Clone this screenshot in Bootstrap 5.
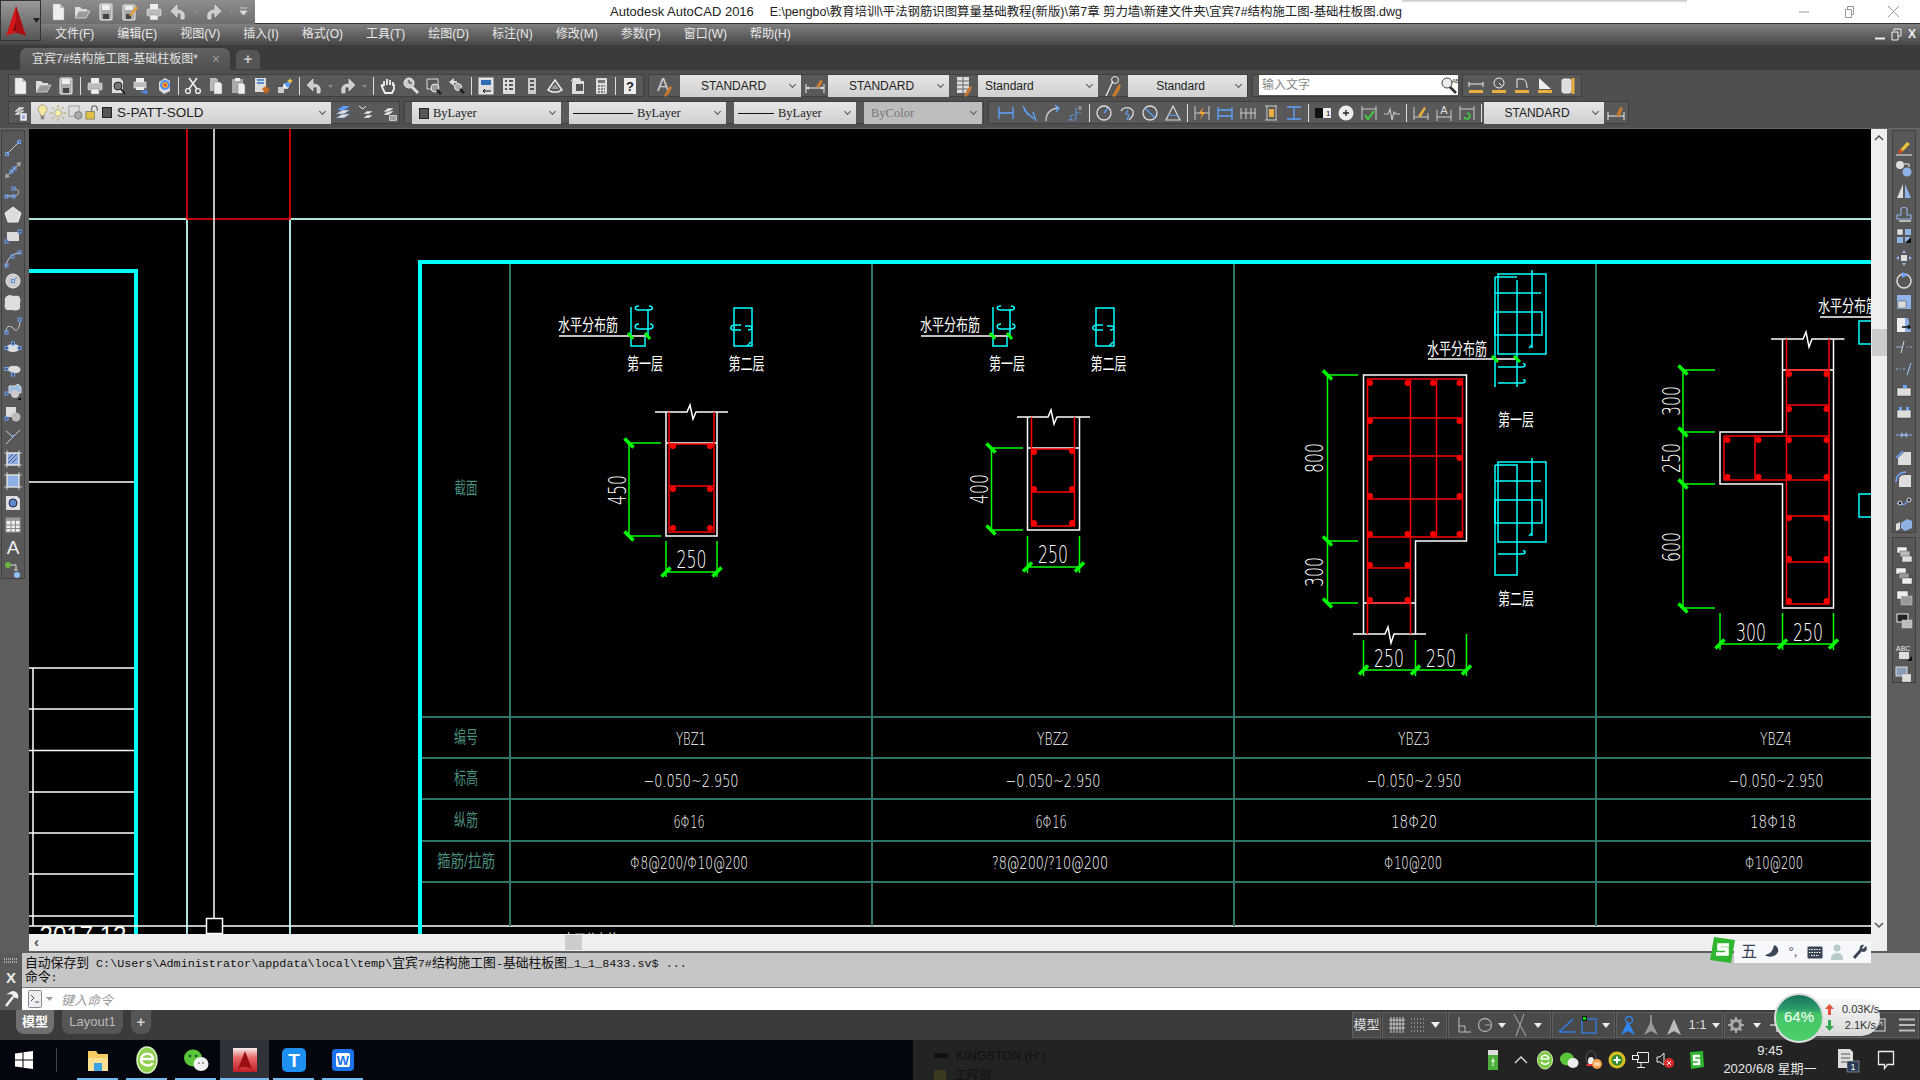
<!DOCTYPE html>
<html lang="zh">
<head>
<meta charset="UTF-8">
<title>Autodesk AutoCAD 2016</title>
<link href="https://cdn.jsdelivr.net/npm/bootstrap@5.3.2/dist/css/bootstrap.min.css" rel="stylesheet">
<style>
    html, body { width: 1920px; height: 1080px; overflow: hidden; background: #3b3b3b; }
    body { font-family: "Liberation Sans", "Noto Sans CJK SC", sans-serif; font-size: 12px; position: relative; }
    svg { display: block; }

    .title-bar { height: 24px; background: #fff; border-bottom: 1px solid #333; }
    .qat { width: 255px; height: 24px; padding-left: 46px; background: linear-gradient(#8d8d8d, #6e6e6e); }
    .qat-btn { width: 24px; height: 23px; }
    .qat-arrow { width: 12px; height: 23px; }
    .title-text { margin-left: 355px; font-size: 12.4px; line-height: 23px; color: #222; white-space: pre; }
    .title-app { font-size: 13px; margin-right: 16px; }
    .title-shade { position: absolute; left: 1402px; top: 0; width: 285px; height: 3px; background: linear-gradient(#c4c4c4, #fff); }
    .win-ctl { width: 45px; height: 23px; color: #999; }
    .app-btn { position: absolute; left: 0; top: 0; width: 41px; height: 41px; background: linear-gradient(#999, #555); border: 1px solid #333; z-index: 5; }

    .menu-bar { height: 21px; padding-left: 55px; gap: 23px; color: #e8e8e8; line-height: 21px; background: linear-gradient(#808080, #474747); }
    .mdi-ctl { color: #eee; font-weight: 700; gap: 6px; padding-right: 4px; }

    .tab-bar { height: 25px; padding-left: 20px; background: #3b3b3b; }
    .doc-tab { width: 210px; height: 22px; margin-top: 3px; padding: 0 10px 0 12px; color: #e2e2e2; background: linear-gradient(#626262, #505050); border-radius: 7px 7px 0 0; line-height: 22px; }
    .doc-tab-x { color: #9a9a9a; font-size: 14px; }
    .doc-tab-add { width: 24px; height: 19px; margin: 5px 0 0 6px; background: #555; border-radius: 5px 5px 0 0; color: #ccc; font-weight: 700; font-size: 15px; line-height: 18px; text-align: center; }

    .tool-area { height: 59px; padding: 4px 0 0 8px; background: #4f4f4f; gap: 4px; border-bottom: 1px solid #666; }
    .tool-row { height: 23px; }
    .tool-panel { height: 23px; background: #595959; box-shadow: inset 0 0 0 1px #3f3f3f; }
    .tool-btn { width: 23px; height: 22px; flex: none; }
    .tool-btn-sm { width: 11px; height: 22px; flex: none; }
    .tool-sep { width: 6px; height: 22px; flex: none; background: linear-gradient(#ddd, #ddd) center / 1px 18px no-repeat; }
    .combo { position: relative; height: 22px; flex: none; padding-left: 7px; background: linear-gradient(#e6e6e6, #d0d0d0); color: #222; line-height: 22px; white-space: nowrap; }
    .combo::after { content: ""; position: absolute; right: 6px; top: 7px; width: 5px; height: 5px; border-right: 1px solid #555; border-bottom: 1px solid #555; transform: rotate(45deg); }
    .combo-std { text-align: center; padding: 0 14px 0 0; }
    .combo-off { background: #bdbdbd; color: #777; }
    .combo-byl { font-family: "Liberation Serif", serif; font-size: 12.5px; }
    .combo-layer { padding-left: 6px; gap: 2px; }
    .layer-name { font-size: 13.5px; margin-left: 3px; }
    .line-swatch { display: inline-block; width: 48px; border-top: 1px solid #111; vertical-align: middle; margin-right: 4px; }
    .color-swatch { display: inline-block; width: 10px; height: 11px; background: #555; border: 1px solid #222; vertical-align: -2px; margin-right: 4px; }
    .text-search { width: 199px; height: 20px; margin: 1px 0 0 7px; padding-left: 3px; background: #fff; color: #888; font-size: 12px; line-height: 20px; }

    .side-strip { background: #5e5e5e; flex: none; }
    .side-strip-l { width: 29px; padding: 1px 0 0 1px; }
    .side-strip-r { width: 33px; padding: 1px 0 0 5px; }
    .side-panel { width: 24px; background: #585858; box-shadow: inset 0 0 0 1px #404040; padding-top: 8px; }
    .side-panel-l { padding-top: 9px; }
    .side-btn { height: 22.2px; flex: none; }
    .side-line { width: 20px; height: 1px; background: #ddd; margin: 6px auto 4px; }

    .draw-col { width: 1858px; flex: none; background: #5e5e5e; padding-bottom: 2px; }
    .draw-row { height: 805px; }
    .cad-canvas { width: 1842px; height: 805px; background: #000; }
    .v-scroll { width: 16px; background: #efefef; position: relative; color: #555; }
    .v-scroll-thumb { position: absolute; left: 1px; top: 200px; width: 15px; height: 27px; background: #ccc; }
    .h-scroll { height: 17px; background: #efefef; position: relative; padding-left: 5px; color: #555; line-height: 16px; font-size: 15px; font-weight: 700; }
    .h-scroll-thumb { position: absolute; left: 536px; top: 1px; width: 17px; height: 15px; background: #ccc; }

    .cad-cmd { height: 57px; background: #c6c6c6; }
    .cmd-handle { width: 22px; background: #5a5a5a; color: #eee; font-weight: 700; }
    .cmd-log { height: 34px; padding: 4px 0 0 3px; font: 11.75px/14px "Liberation Mono", "Noto Sans CJK SC", monospace; color: #111; }
    .cmd-cjk { font-size: 12.8px; }
    .cmd-input { height: 23px; background: #fff; border-top: 1px solid #777; padding-left: 6px; gap: 4px; }
    .cmd-hint { font: italic 13px "Noto Sans CJK SC", sans-serif; color: #999; padding-left: 4px; }

    .status-bar { height: 30px; background: #3b3b3b; }
    .layout-tab { height: 24px; margin-top: 0; color: #bbb; background: #555; border-radius: 0 0 8px 8px; text-align: center; line-height: 24px; }
    .layout-tab-on { width: 38px; margin-left: 16px; color: #fff; background: #707070; font-weight: 700; font-size: 13px; }
    .layout-tab-off { width: 61px; margin-left: 8px; font-size: 13px; }
    .layout-tab-add { width: 20px; margin-left: 8px; color: #ccc; font-weight: 700; font-size: 15px; }
    .stat-panel { height: 26px; margin: 2px 1px 0 0; background: #4a4a4a; box-shadow: inset 0 0 0 1px #5f5f5f; color: #ddd; font-size: 13px; flex: none; gap: 5px; justify-content: center; }

    .task-bar { height: 40px; color: #eee; background: #232323; }
    .task-left { width: 913px; height: 40px; background: #03060c; flex: none; }
    .task-start { width: 48px; height: 40px; }
    .task-line { width: 1px; height: 24px; background: #444; margin-right: 18px; }
    .task-app { width: 49px; height: 40px; position: relative; flex: none; }
    .task-app::after { content: ""; position: absolute; left: 4px; right: 4px; bottom: 0; height: 2px; background: #76b9ed; }
    .task-app-on { background: #2f3238; }
    .task-app-on::after { left: 0; right: 0; }
    .ghost-list { padding: 6px 0 0 21px; color: #111; font-size: 12.5px; line-height: 20px; width: 380px; overflow: hidden; height: 40px; }
    .tray-btn { width: 24px; height: 40px; flex: none; }
    .tray-clock { width: 100px; margin: 0 14px 0 12px; text-align: center; font-size: 13px; line-height: 18px; color: #e8e8e8; }

    .ime-bar { position: absolute; left: 1734px; top: 941px; width: 137px; height: 22px; background: #f6f8fb; z-index: 6; padding-left: 4px; }
    .ime-logo { position: absolute; left: 1709px; top: 936px; z-index: 7; }
    .ime-btn { width: 22px; height: 22px; flex: none; color: #3b4556; font-size: 16px; line-height: 22px; text-align: center; }

    .net-pill { position: absolute; left: 1805px; top: 998px; width: 75px; height: 38px; background: linear-gradient(#fafafa, #d8d8d8); border-radius: 0 19px 19px 0; z-index: 6; padding-left: 20px; color: #333; font-size: 11px; line-height: 16px; }
    .net-ball { position: absolute; left: 1774px; top: 993px; width: 50px; height: 50px; border-radius: 50%; border: 2px solid #ddd; z-index: 7; background: linear-gradient(#17705a 0, #2c9b6c 30%, #43c567 42%, #4fd06c 100%); color: #fff; font-size: 15px; text-align: center; line-height: 44px; }

    .cad-canvas text { font-family: "Liberation Sans", "Noto Sans CJK SC", sans-serif; fill: #fff; text-anchor: middle; }
    .cad-canvas .lbl { fill: #4a8f7e; font-size: 17px; }
    .cad-canvas .dim { font-family: "DejaVu Sans", "Liberation Sans", sans-serif; font-weight: 200; font-size: 25px; }
    .cad-canvas .cjk { font-size: 17px; }
    .cad-canvas .val { font-family: "DejaVu Sans", "Liberation Sans", sans-serif; font-weight: 200; font-size: 18px; }
    .wl { stroke: #fff; stroke-width: 1.5; fill: none; }
    .rl { stroke: #f00; stroke-width: 1.5; fill: none; }
    .gl { stroke: #0f0; stroke-width: 1.5; fill: none; }
    .cl { stroke: #0ff; stroke-width: 1.5; fill: none; }
    .tl { stroke: #2d7667; stroke-width: 2; fill: none; }
    .pl { stroke: #a9e4e0; stroke-width: 2; fill: none; }
    .fr { stroke: #0ff; stroke-width: 4; fill: none; }
    .tk { stroke: #0f0; stroke-width: 3.5; fill: none; }
</style>
</head>
<body>

<!-- icon set -->
<svg width="0" height="0" class="position-absolute">
    <defs>
        <symbol id="i-new" viewBox="0 0 18 18"><path d="M4 1h7l4 4v12H4z" fill="#eee" stroke="#aaa" stroke-width=".5"/><path d="M11 1v4h4" fill="#bbb"/></symbol>
        <symbol id="i-open" viewBox="0 0 18 18"><path d="M2 4h5l2 2h5v2H6l-4 7z" fill="#ddd"/><path d="M6 8h11l-4 7H2z" fill="#999" stroke="#ddd" stroke-width=".8"/></symbol>
        <symbol id="i-save" viewBox="0 0 18 18"><rect x="3" y="1" width="12" height="16" rx="1" fill="#aaa" stroke="#eee"/><rect x="5" y="2" width="8" height="5" fill="#eee"/><rect x="6" y="11" width="6" height="5" fill="#444"/></symbol>
        <symbol id="i-saveas" viewBox="0 0 18 18"><rect x="2" y="2" width="12" height="15" rx="1" fill="#aaa" stroke="#eee"/><rect x="4" y="3" width="8" height="4" fill="#eee"/><rect x="5" y="11" width="5" height="5" fill="#444"/><path d="M9 11l6-8 2 2-6 7-3 1z" fill="#e8a030"/></symbol>
        <symbol id="i-print" viewBox="0 0 18 18"><rect x="5" y="1" width="8" height="5" fill="#eee"/><rect x="2" y="6" width="14" height="7" rx="1" fill="#bbb" stroke="#eee" stroke-width=".6"/><rect x="5" y="12" width="8" height="5" fill="#eee" stroke="#888" stroke-width=".5"/></symbol>
        <symbol id="i-preview" viewBox="0 0 18 18"><path d="M3 1h8l3 3v12H3z" fill="#ddd"/><circle cx="9" cy="9" r="4" fill="#777" stroke="#222"/><path d="M12 12l4 5" stroke="#222" stroke-width="2"/></symbol>
        <symbol id="i-plot" viewBox="0 0 18 18"><rect x="4" y="1" width="8" height="4" fill="#eee"/><rect x="2" y="5" width="12" height="6" fill="#bbb" stroke="#eee" stroke-width=".6"/><rect x="4" y="10" width="8" height="3" fill="#eee"/><path d="M9 15h6m-2-2l2 2-2 2" stroke="#4a90ff" stroke-width="1.5" fill="none"/></symbol>
        <symbol id="i-3d" viewBox="0 0 18 18"><path d="M4 5l6-4 5 3v10l-6 3-5-4z" fill="#ddd"/><circle cx="10" cy="8" r="5" fill="#4a90ff"/><circle cx="10" cy="8" r="3" fill="#e8a030"/><circle cx="10" cy="8" r="1.2" fill="#e33"/></symbol>
        <symbol id="i-cut" viewBox="0 0 18 18"><path d="M5 1l8 11M13 1L5 12" stroke="#eee" stroke-width="1.6"/><circle cx="4" cy="14" r="2.4" fill="none" stroke="#eee" stroke-width="1.4"/><circle cx="14" cy="14" r="2.4" fill="none" stroke="#eee" stroke-width="1.4"/></symbol>
        <symbol id="i-copy" viewBox="0 0 18 18"><path d="M3 1h6l2 2v11H3z" fill="#bbb"/><path d="M7 5h6l2 2v10H7z" fill="#eee" stroke="#777" stroke-width=".5"/></symbol>
        <symbol id="i-paste" viewBox="0 0 18 18"><rect x="2" y="2" width="11" height="14" fill="#aaa"/><rect x="5" y="1" width="5" height="3" fill="#eee"/><path d="M8 6h5l2 2v9H8z" fill="#eee" stroke="#777" stroke-width=".5"/></symbol>
        <symbol id="i-match" viewBox="0 0 18 18"><rect x="2" y="1" width="11" height="14" fill="#ddd"/><path d="M4 3h7M4 6h7" stroke="#37c" stroke-width="1.4"/><path d="M9 12l4-3 4 4-4 4z" fill="#c86d20"/></symbol>
        <symbol id="i-block" viewBox="0 0 18 18"><path d="M2 10h6v6H2z" fill="#ccc"/><circle cx="10" cy="9" r="3" fill="#eee"/><path d="M8 7l5-3 2 2-3 5z" fill="#5b9bff"/><path d="M14 1l1 2 2 1-2 1-1 2-1-2-2-1 2-1z" fill="#f5c842"/></symbol>
        <symbol id="i-undo" viewBox="0 0 18 18"><path d="M8 2L2 8l6 6v-4h4v6h3c1-5 0-9-7-9z" fill="#ccc" stroke="#eee" stroke-width=".6"/></symbol>
        <symbol id="i-redo" viewBox="0 0 18 18"><path d="M10 2l6 6-6 6v-4H6v6H3C2 11 3 7 10 7z" fill="#ccc" stroke="#eee" stroke-width=".6"/></symbol>
        <symbol id="i-down" viewBox="0 0 11 18"><path d="M3 8h5l-2.500 3z" fill="#8a8a8a"/></symbol>
        <symbol id="i-pan" viewBox="0 0 18 18"><path d="M5 9V4m3 4V2m3 6V3m3 6V5M5 9L3 8c-1 0 0 2 1 4l2 4h7l2-4V7" stroke="#eee" stroke-width="1.8" fill="none"/></symbol>
        <symbol id="i-zoomr" viewBox="0 0 18 18"><circle cx="7" cy="6" r="5" fill="#ccc" stroke="#eee"/><path d="M7 3v3h3" stroke="#333" fill="none"/><path d="M10 10l6 6" stroke="#ddd" stroke-width="3"/></symbol>
        <symbol id="i-zoomw" viewBox="0 0 18 18"><path d="M2 2h11v9" stroke="#ddd" fill="none"/><path d="M2 2v10h5" stroke="#ddd" fill="none"/><circle cx="10" cy="11" r="4" fill="#999" stroke="#eee"/><path d="M12 13l4 4" stroke="#222" stroke-width="2.5"/></symbol>
        <symbol id="i-zoomp" viewBox="0 0 18 18"><path d="M6 1L1 5l5 4V6h3V4H6z" fill="#ddd"/><circle cx="10" cy="10" r="3.5" fill="#aaa" stroke="#eee"/><path d="M12 12l4 4" stroke="#222" stroke-width="2.5"/></symbol>
        <symbol id="i-props" viewBox="0 0 18 18"><rect x="2" y="1" width="14" height="16" fill="#ddd" stroke="#eee"/><rect x="4" y="3" width="10" height="5" fill="#2f6db5"/><path d="M6 14h8M6 14l2-2m-2 2l2 2" stroke="#111"/></symbol>
        <symbol id="i-grid" viewBox="0 0 18 18"><rect x="3" y="1" width="12" height="16" fill="#ddd"/><path d="M5 4h2m2 0h4M5 8h2m2 0h4M5 12h2m2 0h4" stroke="#555" stroke-width="2"/></symbol>
        <symbol id="i-tower" viewBox="0 0 18 18"><rect x="5" y="1" width="8" height="16" fill="#ccc"/><path d="M7 4h4M7 8h4M7 12h4" stroke="#555" stroke-width="2"/></symbol>
        <symbol id="i-sheet" viewBox="0 0 18 18"><path d="M2 13l7-10 7 10-4 2H6z" fill="none" stroke="#eee" stroke-width="1.5"/><path d="M5 12l4-5 4 5z" fill="#999"/></symbol>
        <symbol id="i-mark" viewBox="0 0 18 18"><path d="M4 1h7l1 3h3v13H3V5z" fill="#ddd"/><rect x="7" y="7" width="7" height="7" fill="#555"/><path d="M2 4l3-3 3 3" stroke="#eee" fill="none"/></symbol>
        <symbol id="i-calc" viewBox="0 0 18 18"><rect x="4" y="1" width="11" height="16" rx="1" fill="#ddd"/><rect x="6" y="3" width="7" height="3" fill="#777"/><path d="M6 9h7M6 12h7M6 15h7" stroke="#666" stroke-dasharray="2 1" stroke-width="1.4"/></symbol>
        <symbol id="i-help" viewBox="0 0 18 18"><rect x="3" y="1" width="12" height="16" fill="#eee"/><text x="9" y="14" font-size="13" font-weight="700" text-anchor="middle" font-family="Liberation Sans" fill="#222">?</text></symbol>
        <symbol id="i-style" viewBox="0 0 18 24"><text x="8" y="17" font-size="18" text-anchor="middle" font-family="Liberation Sans" fill="#ccc">A</text><path d="M9 22l3-6 3-4 2 1-2 5-4 5z" fill="#c87a30"/></symbol>
        <symbol id="i-dimstyle" viewBox="0 0 20 18"><path d="M1 7v9M19 7v9M1 11h18" stroke="#eee" fill="none"/><path d="M1 11l3-1.500v3zM19 11l-3-1.500v3z" fill="#eee"/><path d="M11 10l4-7 3 1-3 6z" fill="#c87a30"/></symbol>
        <symbol id="i-tablestyle" viewBox="0 0 18 24"><rect x="2" y="3" width="12" height="16" fill="#ddd"/><path d="M2 7h12M2 11h12M2 15h12M8 3v16" stroke="#666"/><path d="M9 22l3-6 3-4 2 1-2 5-4 5z" fill="#c87a30"/></symbol>
        <symbol id="i-ml" viewBox="0 0 18 24"><path d="M2 22l7-15" stroke="#eee" stroke-width="1.3"/><circle cx="11" cy="6" r="3.500" fill="none" stroke="#eee"/><path d="M8 22l4-7 3-5 2 1-2 6-4 6z" fill="#c87a30"/></symbol>
        <symbol id="i-mag" viewBox="0 0 18 18"><circle cx="7" cy="7" r="5" fill="#eee" stroke="#444"/><path d="M10 11l6 6" stroke="#333" stroke-width="2.500"/><text x="12" y="7" font-size="5" fill="#222" font-family="Liberation Sans">ABC</text></symbol>
        <symbol id="i-meas1" viewBox="0 0 18 18"><path d="M2 5v5M16 5v5M2 7h14" stroke="#eee"/><path d="M2 13h14v3H2z" fill="#e8b040"/></symbol>
        <symbol id="i-meas2" viewBox="0 0 18 18"><circle cx="9" cy="6" r="5" fill="none" stroke="#eee"/><path d="M9 6l3 3" stroke="#eee"/><path d="M2 13h14v3H2z" fill="#e8b040"/></symbol>
        <symbol id="i-meas3" viewBox="0 0 18 18"><path d="M4 11V2h5c3 0 5 3 5 9" fill="none" stroke="#eee"/><path d="M2 13h14v3H2z" fill="#e8b040"/></symbol>
        <symbol id="i-meas4" viewBox="0 0 18 18"><path d="M3 12V1l12 11z" fill="#eee"/><path d="M2 13h14v3H2z" fill="#e8b040"/></symbol>
        <symbol id="i-meas5" viewBox="0 0 18 18"><rect x="3" y="2" width="9" height="14" rx="2" fill="#ddd" stroke="#eee"/><path d="M14 1v16" stroke="#e8b040" stroke-width="3"/></symbol>
        <symbol id="i-lay1" viewBox="0 0 18 18"><path d="M3 8l5-5h6l-5 5zM3 11l5-5h6l-5 5z" fill="#ddd" stroke="#555" stroke-width=".5"/><rect x="9" y="9" width="7" height="8" fill="#eee" stroke="#555" stroke-width=".5"/><path d="M11 12h3m-3 2h3" stroke="#3a73c8"/></symbol>
        <symbol id="i-lay2" viewBox="0 0 18 18"><path d="M2 14l6-4h8l-6 4zM2 10l6-4h8l-6 4z" fill="#ddd" stroke="#4b6fa5" stroke-width=".5"/><path d="M3 6l6-4h7l-6 4z" fill="#5b9bff"/></symbol>
        <symbol id="i-lay3" viewBox="0 0 18 18"><path d="M6 14l4-3h6l-4 3zM6 10l4-3h6l-4 3z" fill="#eee" stroke="#555" stroke-width=".5"/><path d="M2 2l4 3 3-3" stroke="#eee" fill="none"/></symbol>
        <symbol id="i-lay4" viewBox="0 0 18 18"><path d="M3 8l5-4h6l-5 4zM3 11l5-4h6l-5 4z" fill="#eee" stroke="#555" stroke-width=".5"/><path d="M9 11h8v6H9z" fill="#eee" stroke="#555" stroke-width=".5"/><path d="M10 13h6M10 15h6" stroke="#555"/></symbol>
        <symbol id="i-bulb" viewBox="0 0 12 20"><path d="M6 1c3 0 5 2 5 5 0 2-3 4-3 7H4C4 10 1 8 1 6c0-3 2-5 5-5z" fill="#f5e9a0" stroke="#a98"/><rect x="4" y="13" width="4" height="4" fill="#888"/></symbol>
        <symbol id="i-sun" viewBox="0 0 16 16"><circle cx="8" cy="8" r="3.500" fill="#f7eda8" stroke="#aa9"/><path d="M8 0v3M8 13v3M0 8h3M13 8h3M2 2l2 2M12 12l2 2M14 2l-2 2M4 12l-2 2" stroke="#b0a050"/></symbol>
        <symbol id="i-lgear" viewBox="0 0 16 16"><rect x="1" y="1" width="11" height="11" fill="#ddd" stroke="#999"/><circle cx="11" cy="11" r="4" fill="#aaa" stroke="#777"/></symbol>
        <symbol id="i-lock" viewBox="0 0 16 16"><rect x="1" y="7" width="9" height="8" fill="#e4bf45" stroke="#886"/><path d="M7 7V4a3 3 0 0 1 6 0v2" fill="none" stroke="#777" stroke-width="1.400"/></symbol>
        <symbol id="d-h" viewBox="0 0 18 18"><path d="M2 3v12M16 3v12M2 9h14" stroke="#5da4ff" stroke-width="1.300" fill="none"/></symbol>
        <symbol id="d-al" viewBox="0 0 18 18"><path d="M3 2l5 9m5-3l3 9M4 6l10 9" stroke="#5da4ff" stroke-width="1.300" fill="none"/></symbol>
        <symbol id="d-arc" viewBox="0 0 18 18"><path d="M3 17C3 9 7 5 15 4" stroke="#ccc" stroke-width="1.300" fill="none"/><path d="M12 1l4 3-3 4" stroke="#5da4ff" stroke-width="1.300" fill="none"/></symbol>
        <symbol id="d-ord" viewBox="0 0 18 18"><path d="M2 16h8V3M10 9h6M5 16v-5h5" stroke="#5da4ff" stroke-width="1.200" fill="none" stroke-dasharray="2 1"/><text x="12" y="6" font-size="6" fill="#ddd" font-family="Liberation Sans">X</text></symbol>
        <symbol id="d-rad" viewBox="0 0 18 18"><circle cx="9" cy="9" r="7" fill="none" stroke="#ddd" stroke-width="1.300"/><path d="M9 9l4-5" stroke="#5da4ff" stroke-width="1.300"/></symbol>
        <symbol id="d-jog" viewBox="0 0 18 18"><path d="M3 7a7 7 0 0 1 12 0c1 4-1 6-4 9" fill="none" stroke="#ddd" stroke-width="1.300"/><path d="M10 6l-2 4 3 1-2 5" stroke="#5da4ff" stroke-width="1.200" fill="none"/></symbol>
        <symbol id="d-dia" viewBox="0 0 18 18"><circle cx="9" cy="9" r="7" fill="none" stroke="#ddd" stroke-width="1.300"/><path d="M4 4l10 10" stroke="#5da4ff" stroke-width="1.300"/></symbol>
        <symbol id="d-ang" viewBox="0 0 18 18"><path d="M2 16h14L9 2z" fill="none" stroke="#ddd" stroke-width="1.200"/><path d="M4 11c3 0 7 0 10 1" fill="none" stroke="#5da4ff" stroke-width="1.200"/></symbol>
        <symbol id="d-qd" viewBox="0 0 18 18"><path d="M2 2v14M16 2v14M2 9h14" stroke="#ccc" fill="none"/><path d="M10 3L6 10h3l-2 6 5-8H9z" fill="#f2a62e"/></symbol>
        <symbol id="d-base" viewBox="0 0 18 18"><path d="M2 3v13M16 3v13M2 6h14M2 12h14" stroke="#5da4ff" stroke-width="1.300" fill="none"/></symbol>
        <symbol id="d-cont" viewBox="0 0 18 18"><path d="M2 4v11M7 4v11M12 4v11M16 4v11M1 9h16" stroke="#ccc" stroke-width="1" fill="none"/></symbol>
        <symbol id="d-space" viewBox="0 0 18 18"><path d="M3 2h12M3 16h12" stroke="#ccc"/><rect x="7" y="5" width="5" height="8" fill="#e8b040"/><path d="M5 2v14M14 2v14" stroke="#ccc"/></symbol>
        <symbol id="d-brk" viewBox="0 0 18 18"><path d="M2 3h14M2 15h14M9 3v12" stroke="#5da4ff" stroke-width="1.300" fill="none"/></symbol>
        <symbol id="d-tol" viewBox="0 0 18 18"><rect x="1" y="4" width="16" height="10" fill="#eee"/><rect x="1" y="4" width="8" height="10" fill="#111"/><text x="12" y="12" font-size="8" fill="#111" font-family="Liberation Sans">1</text></symbol>
        <symbol id="d-cen" viewBox="0 0 18 18"><circle cx="9" cy="9" r="7.500" fill="#eee"/><path d="M9 6v6M6 9h6" stroke="#222" stroke-width="1.300"/></symbol>
        <symbol id="d-insp" viewBox="0 0 18 18"><path d="M2 2v14M16 2v14M2 5h14" stroke="#ccc" fill="none"/><path d="M5 11l3 4 6-8" stroke="#3fd03f" stroke-width="2" fill="none"/></symbol>
        <symbol id="d-jogl" viewBox="0 0 18 18"><path d="M1 10h4l2-5 2 11 2-8 2 2h4" stroke="#ccc" stroke-width="1.100" fill="none"/></symbol>
        <symbol id="d-edit" viewBox="0 0 18 18"><path d="M2 3v13M16 9v7M2 13h14" stroke="#ccc" fill="none"/><path d="M6 12l6-9 2 1-5 9z" fill="#e8b040"/></symbol>
        <symbol id="d-tedit" viewBox="0 0 18 18"><path d="M2 17V6M16 17V6M2 13h14" stroke="#ccc" fill="none"/><text x="9" y="10" font-size="11" text-anchor="middle" fill="#ddd" font-family="Liberation Sans">A</text></symbol>
        <symbol id="d-upd" viewBox="0 0 18 18"><path d="M2 2v14M16 2v14M2 5h14" stroke="#ccc" fill="none"/><path d="M6 13a3 3 0 1 0 3-4" stroke="#3fd03f" stroke-width="1.600" fill="none"/></symbol>
        <symbol id="d-style" viewBox="0 0 18 18"><path d="M1 8v8M17 8v8M1 12h16" stroke="#eee" fill="none"/><path d="M9 12l4-9 3 1-3 8z" fill="#c87a30"/></symbol>
        <symbol id="l-line" viewBox="0 0 18 18"><path d="M3 15L15 3" stroke="#ccc"/><rect x="1.500" y="13.500" width="3" height="3" fill="none" stroke="#6ba5ff"/><rect x="13.500" y="1.500" width="3" height="3" fill="none" stroke="#6ba5ff"/></symbol>
        <symbol id="l-xline" viewBox="0 0 18 18"><path d="M2 16L16 2" stroke="#ccc"/><path d="M1 17l5-1-4-4zM17 1l-5 1 4 4z" fill="#aaa"/><rect x="6" y="9" width="3" height="3" fill="none" stroke="#6ba5ff"/><rect x="9" y="6" width="3" height="3" fill="none" stroke="#6ba5ff"/></symbol>
        <symbol id="l-pline" viewBox="0 0 18 18"><path d="M2 13h8c6 0 6-7 1-7" stroke="#ccc" fill="none"/><rect x="1" y="12" width="3" height="3" fill="none" stroke="#6ba5ff"/><rect x="8" y="12" width="3" height="3" fill="none" stroke="#6ba5ff"/><rect x="8" y="4" width="3" height="3" fill="none" stroke="#6ba5ff"/></symbol>
        <symbol id="l-poly" viewBox="0 0 18 18"><path d="M9 1l8 6-3 9H4L1 7z" fill="#ddd" stroke="#eee"/></symbol>
        <symbol id="l-rect" viewBox="0 0 18 18"><rect x="3" y="4" width="12" height="9" fill="#ddd"/><rect x="1" y="12" width="3" height="3" fill="#444" stroke="#6ba5ff"/><rect x="14" y="2" width="3" height="3" fill="#444" stroke="#6ba5ff"/></symbol>
        <symbol id="l-arc" viewBox="0 0 18 18"><path d="M2 16C3 9 8 3 16 3" stroke="#ccc" fill="none"/><rect x="1" y="14" width="3" height="3" fill="none" stroke="#6ba5ff"/><rect x="7" y="5" width="3" height="3" fill="none" stroke="#6ba5ff"/><rect x="14" y="1" width="3" height="3" fill="none" stroke="#6ba5ff"/></symbol>
        <symbol id="l-circ" viewBox="0 0 18 18"><circle cx="9" cy="9" r="7" fill="#ccc" stroke="#eee"/><rect x="7.500" y="7.500" width="3" height="3" fill="none" stroke="#5a8fe0"/><path d="M10 8l3-3" stroke="#5a8fe0"/></symbol>
        <symbol id="l-cloud" viewBox="0 0 18 18"><path d="M3 2c3-2 5 0 7 0s5-1 6 2 0 4 0 6 1 5-2 6-5 0-7 0-5 1-6-2 0-4 0-6-1-4 2-6z" fill="#ddd"/></symbol>
        <symbol id="l-spl" viewBox="0 0 18 18"><path d="M2 15c0-8 6-6 8-3s5 1 6-7" stroke="#ccc" fill="none"/><rect x="1" y="14" width="3" height="3" fill="none" stroke="#6ba5ff"/><rect x="14" y="1" width="3" height="3" fill="none" stroke="#6ba5ff"/></symbol>
        <symbol id="l-ell" viewBox="0 0 18 18"><ellipse cx="9" cy="9" rx="7" ry="4" fill="#ddd"/><rect x="1" y="7.500" width="3" height="3" fill="#444" stroke="#6ba5ff"/><rect x="14" y="7.500" width="3" height="3" fill="#444" stroke="#6ba5ff"/><rect x="7.500" y="3" width="3" height="3" fill="#444" stroke="#6ba5ff"/></symbol>
        <symbol id="l-ella" viewBox="0 0 18 18"><path d="M4 7c2-3 10-3 12 0s-2 6-6 5-7-2-6-5z" fill="#ddd"/><rect x="1" y="6.500" width="3" height="3" fill="#444" stroke="#6ba5ff"/><rect x="7.500" y="12" width="3" height="3" fill="#444" stroke="#6ba5ff"/></symbol>
        <symbol id="l-ins" viewBox="0 0 18 18"><path d="M5 3h6l3-2 3 3v6H5z" fill="#9bbbe0" stroke="#ddd"/><circle cx="11" cy="11" r="4" fill="#ccc"/><path d="M13 17l4-3v3z" fill="#111"/><rect x="1" y="9" width="3" height="3" fill="#444" stroke="#6ba5ff"/></symbol>
        <symbol id="l-make" viewBox="0 0 18 18"><rect x="2" y="2" width="10" height="10" fill="#ddd"/><circle cx="12" cy="12" r="4.500" fill="#bbb"/><rect x="1" y="12" width="3" height="3" fill="#444" stroke="#6ba5ff"/></symbol>
        <symbol id="l-pt" viewBox="0 0 18 18"><path d="M2 17L16 3M2 4l7 6" stroke="#ccc"/><rect x="8" y="8" width="2" height="2" fill="#6ba5ff"/></symbol>
        <symbol id="l-hatch" viewBox="0 0 18 18"><rect x="3" y="3" width="12" height="12" fill="#8eb0e6" stroke="#eee"/><path d="M4 9l5-5m-5 9l9-9m-5 9l5-5" stroke="#557"/><path d="M0 3h18M3 0v18M0 15h18M15 0v18" stroke="#eee" stroke-width=".7"/></symbol>
        <symbol id="l-grad" viewBox="0 0 18 18"><rect x="3" y="3" width="12" height="12" fill="#8eb0e6" stroke="#ddd"/><path d="M0 3h18M3 0v18M0 15h18M15 0v18" stroke="#eee" stroke-width=".7"/></symbol>
        <symbol id="l-reg" viewBox="0 0 18 18"><path d="M2 2h11l3 3v11H2z" fill="#ddd"/><circle cx="9" cy="9" r="4" fill="#5f8bcd" stroke="#224"/></symbol>
        <symbol id="l-tab" viewBox="0 0 18 18"><rect x="2" y="2" width="14" height="14" fill="#eee" stroke="#999"/><rect x="2" y="2" width="14" height="3" fill="#999"/><path d="M2 9h14M2 12.500h14M7 5v11M11.500 5v11" stroke="#888"/></symbol>
        <symbol id="l-text" viewBox="0 0 18 18"><text x="9" y="16" font-size="19" text-anchor="middle" fill="#eee" font-family="Liberation Sans">A</text></symbol>
        <symbol id="l-add" viewBox="0 0 18 18"><circle cx="4" cy="4" r="3" fill="#6cb33f"/><circle cx="13" cy="14" r="3" fill="#8fc2ff"/><path d="M7 4h5v5m-2 0h4" stroke="#ddd" fill="none"/></symbol>
        <symbol id="r-erase" viewBox="0 0 18 18"><path d="M4 13l8-9 3 2-8 8z" fill="#eec23a"/><path d="M3 14l2-3 3 2-3 3z" fill="#d64a1e"/><path d="M1 17h16" stroke="#eee"/></symbol>
        <symbol id="r-copy" viewBox="0 0 18 18"><circle cx="5" cy="5" r="4" fill="#ddd"/><circle cx="12" cy="12" r="4.500" fill="#8fb3e6"/><path d="M9 4h5v3" stroke="#eee" fill="none"/></symbol>
        <symbol id="r-mirror" viewBox="0 0 18 18"><path d="M8 2v14H2z" fill="#ddd"/><path d="M10 2v14h6z" fill="#8fb3e6"/></symbol>
        <symbol id="r-off" viewBox="0 0 18 18"><path d="M2 14V10h4V4c0-2 6-2 6 0v6h4v4z" fill="none" stroke="#8fb3e6" stroke-width="1.200"/><path d="M4 16h12" stroke="#ddd" stroke-width="1.500"/></symbol>
        <symbol id="r-arr" viewBox="0 0 18 18"><rect x="2" y="2" width="6" height="6" fill="#ddd" stroke="#333" stroke-width=".4"/><rect x="10" y="2" width="6" height="6" fill="#8fb3e6"/><rect x="2" y="10" width="6" height="6" fill="#8fb3e6"/><path d="M10 10h6v6H10z" fill="#8fb3e6"/><path d="M16 10v6h-6z" fill="#111"/></symbol>
        <symbol id="r-move" viewBox="0 0 18 18"><rect x="6" y="6" width="6" height="6" fill="#ddd"/><path d="M9 1l2 3H7zM9 17l2-3H7zM1 9l3 2V7zM17 9l-3 2V7z" fill="#8fb3e6"/></symbol>
        <symbol id="r-rot" viewBox="0 0 18 18"><circle cx="9" cy="10" r="7" fill="none" stroke="#ddd" stroke-width="1.500"/><path d="M7 1l6 3-6 3z" fill="#6ba5ff"/></symbol>
        <symbol id="r-scale" viewBox="0 0 18 18"><rect x="2" y="2" width="14" height="14" fill="#8fb3e6"/><rect x="3" y="8" width="8" height="7" fill="#ddd" stroke="#333" stroke-width=".4"/></symbol>
        <symbol id="r-str" viewBox="0 0 18 18"><rect x="2" y="2" width="8" height="14" fill="#eee"/><path d="M10 2h3l3 14h-6z" fill="#8fb3e6"/><path d="M7 11h8m-2-2l2 2-2 2" stroke="#111" stroke-width="1.400" fill="none"/></symbol>
        <symbol id="r-trim" viewBox="0 0 18 18"><path d="M1 9h6m5 0h1m2 0h2" stroke="#8fb3e6" stroke-width="1.200"/><path d="M6 15l3-12" stroke="#ddd"/></symbol>
        <symbol id="r-ext" viewBox="0 0 18 18"><path d="M1 9h2m2 0h1m2 0h2" stroke="#8fb3e6" stroke-width="1.200"/><path d="M12 15l4-12" stroke="#8fb3e6" stroke-width="1.200"/></symbol>
        <symbol id="r-brk1" viewBox="0 0 18 18"><rect x="2" y="6" width="14" height="8" fill="#ddd" stroke="#222" stroke-width=".4"/><rect x="8" y="3" width="4" height="3" fill="#6ba5ff"/></symbol>
        <symbol id="r-brk2" viewBox="0 0 18 18"><rect x="2" y="6" width="14" height="8" fill="#ddd" stroke="#222" stroke-width=".4"/><rect x="4" y="3" width="3" height="3" fill="#6ba5ff"/><rect x="11" y="3" width="3" height="3" fill="#6ba5ff"/></symbol>
        <symbol id="r-join" viewBox="0 0 18 18"><path d="M1 9h16" stroke="#8fb3e6"/><path d="M6 6l3 3-3 3zM12 6L9 9l3 3z" fill="#8fb3e6"/></symbol>
        <symbol id="r-cham" viewBox="0 0 18 18"><path d="M3 16V9l6-6h7v13z" fill="#ddd"/><path d="M1 9l7-7" stroke="#6ba5ff" stroke-width="1.500"/></symbol>
        <symbol id="r-fil" viewBox="0 0 18 18"><path d="M4 16V9c0-4 3-5 6-5h6v12z" fill="#ddd"/><path d="M1 11C1 5 5 1 11 1" stroke="#6ba5ff" stroke-width="1.500" fill="none"/></symbol>
        <symbol id="r-blend" viewBox="0 0 18 18"><path d="M2 11c3-5 5 3 8 0s3-5 6-5" stroke="#6ba5ff" fill="none" stroke-width="1.300"/><circle cx="5" cy="10" r="2" fill="#224" stroke="#ddd"/><circle cx="14" cy="7" r="2" fill="#224" stroke="#ddd"/></symbol>
        <symbol id="r-exp" viewBox="0 0 18 18"><path d="M6 8l6-4 5 2v7l-7 3-4-3z" fill="#8fb3e6"/><path d="M1 9l4-2v7l-4 2z" fill="#ddd"/></symbol>
        <symbol id="r-ord1" viewBox="0 0 18 18"><rect x="2" y="2" width="10" height="6" fill="#eee" stroke="#333" stroke-width=".4"/><rect x="5" y="6" width="10" height="6" fill="#bbb" stroke="#333" stroke-width=".4"/><rect x="7" y="11" width="10" height="6" fill="#ddd" stroke="#333" stroke-width=".4"/></symbol>
        <symbol id="r-ord2" viewBox="0 0 18 18"><rect x="1" y="1" width="10" height="6" fill="#eee" stroke="#333" stroke-width=".4"/><rect x="4" y="6" width="10" height="6" fill="#999" stroke="#333" stroke-width=".4"/><rect x="7" y="11" width="10" height="6" fill="#eee" stroke="#333" stroke-width=".4"/></symbol>
        <symbol id="r-ord3" viewBox="0 0 18 18"><rect x="2" y="2" width="11" height="8" fill="#eee" stroke="#333" stroke-width=".4"/><rect x="6" y="7" width="11" height="9" fill="#999" stroke="#ddd" stroke-width=".4"/></symbol>
        <symbol id="r-ord4" viewBox="0 0 18 18"><rect x="2" y="2" width="11" height="8" fill="#222" stroke="#eee"/><rect x="7" y="8" width="10" height="8" fill="#bbb" stroke="#ddd" stroke-width=".4"/></symbol>
        <symbol id="r-abc" viewBox="0 0 18 18"><text x="1" y="7" font-size="7" fill="#eee" font-family="Liberation Sans">ABC</text><rect x="4" y="8" width="10" height="7" fill="#ddd"/><path d="M17 12v5h-5z" fill="#111"/></symbol>
        <symbol id="r-hatchorder" viewBox="0 0 18 18"><rect x="1" y="1" width="11" height="9" fill="#8b9db8" stroke="#ddd"/><rect x="7" y="8" width="9" height="8" fill="#ddd" stroke="#666" stroke-width=".5" stroke-dasharray="1 1"/></symbol>
        <path id="tk" d="M-4.500 4.500L4.500 -4.500" class="tk"/>
        <circle id="dt" r="3" fill="#f00"/>
    </defs>
</svg>

<!-- big A button -->
<div class="app-btn d-flex align-items-center">
    <svg width="32" height="36" viewBox="0 0 32 36">
        <path d="M15 3L5 33c4-2 7-3 10-3s6 1 10 3z" fill="#d2161a"/>
        <path d="M15 18l-3 10h6z" fill="#7d0c0f"/>
        <path d="M15 3l3 9 7 21c-4-2-7-3-10-3z" fill="#a70f13"/>
    </svg>
    <svg width="7" height="5" viewBox="0 0 7 5"><path d="M0 0h7L3.500 5z" fill="#222"/></svg>
</div>
<div class="title-shade"></div>

<!-- title bar -->
<div class="title-bar d-flex">
    <div class="qat d-flex align-items-center">
        <div class="qat-btn d-flex align-items-center justify-content-center"><svg width="18" height="18"><use href="#i-new"/></svg></div>
        <div class="qat-btn d-flex align-items-center justify-content-center"><svg width="18" height="18"><use href="#i-open"/></svg></div>
        <div class="qat-btn d-flex align-items-center justify-content-center"><svg width="18" height="18"><use href="#i-save"/></svg></div>
        <div class="qat-btn d-flex align-items-center justify-content-center"><svg width="18" height="18"><use href="#i-saveas"/></svg></div>
        <div class="qat-btn d-flex align-items-center justify-content-center"><svg width="18" height="18"><use href="#i-print"/></svg></div>
        <div class="qat-btn d-flex align-items-center justify-content-center"><svg width="18" height="18"><use href="#i-undo"/></svg></div>
        <div class="qat-arrow"><svg width="11" height="22"><use href="#i-down"/></svg></div>
        <div class="qat-btn d-flex align-items-center justify-content-center"><svg width="18" height="18"><use href="#i-redo"/></svg></div>
        <div class="qat-arrow"><svg width="11" height="22"><use href="#i-down"/></svg></div>
        <div class="qat-arrow"><svg width="11" height="22" viewBox="0 0 11 22"><path d="M2 7h7M2 10h7l-3.500 4z" stroke="#ddd" fill="#ddd" stroke-width=".8"/></svg></div>
    </div>
    <div class="title-text"><span class="title-app">Autodesk AutoCAD 2016</span>E:\pengbo\教育培训\平法钢筋识图算量基础教程(新版)\第7章 剪力墙\新建文件夹\宜宾7#结构施工图-基础柱板图.dwg</div>
    <div class="ms-auto d-flex me-1">
        <div class="win-ctl d-flex align-items-center justify-content-center"><svg width="10" height="10"><path d="M0 5h10" stroke="#999"/></svg></div>
        <div class="win-ctl d-flex align-items-center justify-content-center"><svg width="10" height="12"><path d="M1.500 3.500h6v8h-6zM3.500 3V.5h6v8H8" stroke="#999" fill="none"/></svg></div>
        <div class="win-ctl d-flex align-items-center justify-content-center"><svg width="11" height="11"><path d="M0 0l11 11M11 0L0 11" stroke="#999"/></svg></div>
    </div>
</div>

<!-- menu -->
<div class="menu-bar d-flex">
    <span>文件(F)</span><span>编辑(E)</span><span>视图(V)</span><span>插入(I)</span><span>格式(O)</span><span>工具(T)</span>
    <span>绘图(D)</span><span>标注(N)</span><span>修改(M)</span><span>参数(P)</span><span>窗口(W)</span><span>帮助(H)</span>
    <div class="ms-auto d-flex mdi-ctl align-items-center">
        <svg width="10" height="10"><path d="M0 8.500h10" stroke="#eee" stroke-width="2"/></svg>
        <svg width="11" height="13"><path d="M1 4h6v8H1zM3 3V1h7v7H7" stroke="#eee" fill="none"/></svg>
        <span>X</span>
    </div>
</div>

<!-- document tabs -->
<div class="tab-bar d-flex">
    <div class="doc-tab d-flex justify-content-between">
        <span>宜宾7#结构施工图-基础柱板图*</span><span class="doc-tab-x">×</span>
    </div>
    <div class="doc-tab-add">+</div>
</div>

<!-- classic toolbars -->
<div class="tool-area d-flex flex-column">
    <div class="tool-row d-flex gap-1">
        <div class="tool-panel d-flex align-items-center" style="width:636px">
            <div class="tool-btn d-flex align-items-center justify-content-center"><svg width="18" height="18"><use href="#i-new"/></svg></div>
            <div class="tool-btn d-flex align-items-center justify-content-center"><svg width="18" height="18"><use href="#i-open"/></svg></div>
            <div class="tool-btn d-flex align-items-center justify-content-center"><svg width="18" height="18"><use href="#i-save"/></svg></div>
            <div class="tool-sep"></div>
            <div class="tool-btn d-flex align-items-center justify-content-center"><svg width="18" height="18"><use href="#i-print"/></svg></div>
            <div class="tool-btn d-flex align-items-center justify-content-center"><svg width="18" height="18"><use href="#i-preview"/></svg></div>
            <div class="tool-btn d-flex align-items-center justify-content-center"><svg width="18" height="18"><use href="#i-plot"/></svg></div>
            <div class="tool-btn d-flex align-items-center justify-content-center"><svg width="18" height="18"><use href="#i-3d"/></svg></div>
            <div class="tool-sep"></div>
            <div class="tool-btn d-flex align-items-center justify-content-center"><svg width="18" height="18"><use href="#i-cut"/></svg></div>
            <div class="tool-btn d-flex align-items-center justify-content-center"><svg width="18" height="18"><use href="#i-copy"/></svg></div>
            <div class="tool-btn d-flex align-items-center justify-content-center"><svg width="18" height="18"><use href="#i-paste"/></svg></div>
            <div class="tool-btn d-flex align-items-center justify-content-center"><svg width="18" height="18"><use href="#i-match"/></svg></div>
            <div class="tool-btn d-flex align-items-center justify-content-center"><svg width="18" height="18"><use href="#i-block"/></svg></div>
            <div class="tool-sep"></div>
            <div class="tool-btn d-flex align-items-center justify-content-center"><svg width="18" height="18"><use href="#i-undo"/></svg></div>
            <div class="tool-btn-sm"><svg width="11" height="22"><use href="#i-down"/></svg></div>
            <div class="tool-btn d-flex align-items-center justify-content-center"><svg width="18" height="18"><use href="#i-redo"/></svg></div>
            <div class="tool-btn-sm"><svg width="11" height="22"><use href="#i-down"/></svg></div>
            <div class="tool-sep"></div>
            <div class="tool-btn d-flex align-items-center justify-content-center"><svg width="18" height="18"><use href="#i-pan"/></svg></div>
            <div class="tool-btn d-flex align-items-center justify-content-center"><svg width="18" height="18"><use href="#i-zoomr"/></svg></div>
            <div class="tool-btn d-flex align-items-center justify-content-center"><svg width="18" height="18"><use href="#i-zoomw"/></svg></div>
            <div class="tool-btn d-flex align-items-center justify-content-center"><svg width="18" height="18"><use href="#i-zoomp"/></svg></div>
            <div class="tool-sep"></div>
            <div class="tool-btn d-flex align-items-center justify-content-center"><svg width="18" height="18"><use href="#i-props"/></svg></div>
            <div class="tool-btn d-flex align-items-center justify-content-center"><svg width="18" height="18"><use href="#i-grid"/></svg></div>
            <div class="tool-btn d-flex align-items-center justify-content-center"><svg width="18" height="18"><use href="#i-tower"/></svg></div>
            <div class="tool-btn d-flex align-items-center justify-content-center"><svg width="18" height="18"><use href="#i-sheet"/></svg></div>
            <div class="tool-btn d-flex align-items-center justify-content-center"><svg width="18" height="18"><use href="#i-mark"/></svg></div>
            <div class="tool-btn d-flex align-items-center justify-content-center"><svg width="18" height="18"><use href="#i-calc"/></svg></div>
            <div class="tool-sep"></div>
            <div class="tool-btn d-flex align-items-center justify-content-center"><svg width="18" height="18"><use href="#i-help"/></svg></div>
        </div>
        <div class="tool-panel d-flex align-items-center" style="width:600px">
            <div class="d-flex justify-content-center" style="width:32px"><svg width="18" height="24"><use href="#i-style"/></svg></div>
            <div class="combo combo-std" style="width:121px">STANDARD</div>
            <div class="tool-btn d-flex align-items-center justify-content-center" style="width:27px"><svg width="20" height="18"><use href="#i-dimstyle"/></svg></div>
            <div class="combo combo-std" style="width:121px">STANDARD</div>
            <div class="d-flex justify-content-center" style="width:29px"><svg width="18" height="24"><use href="#i-tablestyle"/></svg></div>
            <div class="combo" style="width:120px">Standard</div>
            <div class="d-flex justify-content-center" style="width:30px"><svg width="18" height="24"><use href="#i-ml"/></svg></div>
            <div class="combo combo-std" style="width:119px">Standard</div>
        </div>
        <div class="tool-panel d-flex position-relative" style="width:206px">
            <div class="text-search flex-grow-1">输入文字</div>
            <svg class="position-absolute end-0" style="top:2px" width="18" height="18"><use href="#i-mag"/></svg>
        </div>
        <div class="tool-panel d-flex align-items-center justify-content-center" style="width:120px">
            <div class="tool-btn d-flex align-items-center justify-content-center"><svg width="18" height="18"><use href="#i-meas1"/></svg></div>
            <div class="tool-btn d-flex align-items-center justify-content-center"><svg width="18" height="18"><use href="#i-meas2"/></svg></div>
            <div class="tool-btn d-flex align-items-center justify-content-center"><svg width="18" height="18"><use href="#i-meas3"/></svg></div>
            <div class="tool-btn d-flex align-items-center justify-content-center"><svg width="18" height="18"><use href="#i-meas4"/></svg></div>
            <div class="tool-btn d-flex align-items-center justify-content-center"><svg width="18" height="18"><use href="#i-meas5"/></svg></div>
        </div>
    </div>
    <div class="tool-row d-flex gap-1">
        <div class="tool-panel d-flex align-items-center" style="width:392px">
            <div class="tool-btn d-flex align-items-center justify-content-center"><svg width="18" height="18"><use href="#i-lay1"/></svg></div>
            <div class="combo combo-layer d-flex align-items-center" style="width:300px">
                <svg width="11" height="18"><use href="#i-bulb"/></svg>
                <svg width="16" height="16"><use href="#i-sun"/></svg>
                <svg width="15" height="15"><use href="#i-lgear"/></svg>
                <svg width="15" height="15"><use href="#i-lock"/></svg>
                <span class="color-swatch m-0"></span>
                <span class="layer-name">S-PATT-SOLD</span>
            </div>
            <div class="tool-btn d-flex align-items-center justify-content-center"><svg width="18" height="18"><use href="#i-lay2"/></svg></div>
            <div class="tool-btn d-flex align-items-center justify-content-center"><svg width="18" height="18"><use href="#i-lay3"/></svg></div>
            <div class="tool-btn d-flex align-items-center justify-content-center"><svg width="18" height="18"><use href="#i-lay4"/></svg></div>
        </div>
        <div class="tool-panel d-flex align-items-center gap-2" style="width:580px;padding-left:8px">
            <div class="combo combo-byl" style="width:149px"><span class="color-swatch"></span>ByLayer</div>
            <div class="combo combo-byl" style="width:157px;padding-left:4px"><span class="line-swatch" style="width:60px"></span>ByLayer</div>
            <div class="combo combo-byl" style="width:122px;padding-left:4px"><span class="line-swatch" style="width:36px"></span>ByLayer</div>
            <div class="combo combo-byl combo-off" style="width:118px">ByColor</div>
        </div>
        <div class="tool-panel d-flex align-items-center" style="width:641px;padding-left:6px">
            <div class="tool-btn d-flex align-items-center justify-content-center"><svg width="18" height="18"><use href="#d-h"/></svg></div>
            <div class="tool-btn d-flex align-items-center justify-content-center"><svg width="18" height="18"><use href="#d-al"/></svg></div>
            <div class="tool-btn d-flex align-items-center justify-content-center"><svg width="18" height="18"><use href="#d-arc"/></svg></div>
            <div class="tool-btn d-flex align-items-center justify-content-center"><svg width="18" height="18"><use href="#d-ord"/></svg></div>
            <div class="tool-sep"></div>
            <div class="tool-btn d-flex align-items-center justify-content-center"><svg width="18" height="18"><use href="#d-rad"/></svg></div>
            <div class="tool-btn d-flex align-items-center justify-content-center"><svg width="18" height="18"><use href="#d-jog"/></svg></div>
            <div class="tool-btn d-flex align-items-center justify-content-center"><svg width="18" height="18"><use href="#d-dia"/></svg></div>
            <div class="tool-btn d-flex align-items-center justify-content-center"><svg width="18" height="18"><use href="#d-ang"/></svg></div>
            <div class="tool-sep"></div>
            <div class="tool-btn d-flex align-items-center justify-content-center"><svg width="18" height="18"><use href="#d-qd"/></svg></div>
            <div class="tool-btn d-flex align-items-center justify-content-center"><svg width="18" height="18"><use href="#d-base"/></svg></div>
            <div class="tool-btn d-flex align-items-center justify-content-center"><svg width="18" height="18"><use href="#d-cont"/></svg></div>
            <div class="tool-btn d-flex align-items-center justify-content-center"><svg width="18" height="18"><use href="#d-space"/></svg></div>
            <div class="tool-btn d-flex align-items-center justify-content-center"><svg width="18" height="18"><use href="#d-brk"/></svg></div>
            <div class="tool-sep"></div>
            <div class="tool-btn d-flex align-items-center justify-content-center"><svg width="18" height="18"><use href="#d-tol"/></svg></div>
            <div class="tool-btn d-flex align-items-center justify-content-center"><svg width="18" height="18"><use href="#d-cen"/></svg></div>
            <div class="tool-btn d-flex align-items-center justify-content-center"><svg width="18" height="18"><use href="#d-insp"/></svg></div>
            <div class="tool-btn d-flex align-items-center justify-content-center"><svg width="18" height="18"><use href="#d-jogl"/></svg></div>
            <div class="tool-sep"></div>
            <div class="tool-btn d-flex align-items-center justify-content-center"><svg width="18" height="18"><use href="#d-edit"/></svg></div>
            <div class="tool-btn d-flex align-items-center justify-content-center"><svg width="18" height="18"><use href="#d-tedit"/></svg></div>
            <div class="tool-btn d-flex align-items-center justify-content-center"><svg width="18" height="18"><use href="#d-upd"/></svg></div>
            <div class="tool-sep"></div>
            <div class="combo combo-std" style="width:120px">STANDARD</div>
            <div class="tool-btn d-flex align-items-center justify-content-center"><svg width="18" height="18"><use href="#d-style"/></svg></div>
        </div>
    </div>
</div>

<!-- drawing area -->
<div class="d-flex">
    <div class="side-strip side-strip-l">
        <div class="side-panel side-panel-l d-flex flex-column align-items-center" style="height:449px">
            <div class="side-btn"><svg width="18" height="18"><use href="#l-line"/></svg></div>
            <div class="side-btn"><svg width="18" height="18"><use href="#l-xline"/></svg></div>
            <div class="side-btn"><svg width="18" height="18"><use href="#l-pline"/></svg></div>
            <div class="side-btn"><svg width="18" height="18"><use href="#l-poly"/></svg></div>
            <div class="side-btn"><svg width="18" height="18"><use href="#l-rect"/></svg></div>
            <div class="side-btn"><svg width="18" height="18"><use href="#l-arc"/></svg></div>
            <div class="side-btn"><svg width="18" height="18"><use href="#l-circ"/></svg></div>
            <div class="side-btn"><svg width="18" height="18"><use href="#l-cloud"/></svg></div>
            <div class="side-btn"><svg width="18" height="18"><use href="#l-spl"/></svg></div>
            <div class="side-btn"><svg width="18" height="18"><use href="#l-ell"/></svg></div>
            <div class="side-btn"><svg width="18" height="18"><use href="#l-ella"/></svg></div>
            <div class="side-btn"><svg width="18" height="18"><use href="#l-ins"/></svg></div>
            <div class="side-btn"><svg width="18" height="18"><use href="#l-make"/></svg></div>
            <div class="side-btn"><svg width="18" height="18"><use href="#l-pt"/></svg></div>
            <div class="side-btn"><svg width="18" height="18"><use href="#l-hatch"/></svg></div>
            <div class="side-btn"><svg width="18" height="18"><use href="#l-grad"/></svg></div>
            <div class="side-btn"><svg width="18" height="18"><use href="#l-reg"/></svg></div>
            <div class="side-btn"><svg width="18" height="18"><use href="#l-tab"/></svg></div>
            <div class="side-btn"><svg width="18" height="18"><use href="#l-text"/></svg></div>
            <div class="side-btn"><svg width="18" height="18"><use href="#l-add"/></svg></div>
        </div>
    </div>

    <div class="draw-col">
        <div class="draw-row d-flex">
            <div class="cad-canvas">
                <svg width="1842" height="805" viewBox="29 129 1842 805">
                    <!-- left sheet border and guide lines -->
                    <path class="pl" d="M29 219H187V934M290 934V219H1871"/>
                    <path class="rl" d="M187 129V219H290V129"/>
                    <path class="wl" d="M214 129V918M214 933V934"/>
                    <path class="fr" d="M29 271H136V934"/>
                    <path class="wl" d="M29 482H134M29 668H134M29 709H134M29 750.500H134M29 792H134M29 833H134M29 874H134M29 916H134M33 668V926"/>
                    <path class="wl" d="M29 926H206M223 926H1871"/>
                    <rect x="206.500" y="918.500" width="16" height="15" fill="#000" stroke="#fff" stroke-width="1.500"/>
                    <text x="83" y="944" font-size="26" fill="#bbb" textLength="87" lengthAdjust="spacingAndGlyphs">2017.12</text>

                    <!-- table frame -->
                    <path class="tl" d="M510 264V926M872 264V926M1234 264V926M1596 264V926M422 717H1871M422 758H1871M422 799H1871M422 841H1871M422 882H1871"/>
                    <path class="fr" d="M420 934V262H1871"/>
                    <text class="lbl" x="466" y="494" textLength="23" lengthAdjust="spacingAndGlyphs">截面</text>
                    <text class="lbl" x="466" y="743" textLength="24" lengthAdjust="spacingAndGlyphs">编号</text>
                    <text class="lbl" x="466" y="784" textLength="24" lengthAdjust="spacingAndGlyphs">标高</text>
                    <text class="lbl" x="466" y="826" textLength="24" lengthAdjust="spacingAndGlyphs">纵筋</text>
                    <text class="lbl" x="466" y="867" textLength="58" lengthAdjust="spacingAndGlyphs">箍筋/拉筋</text>

                    <text class="val" x="691" y="745" textLength="30" lengthAdjust="spacingAndGlyphs">YBZ1</text>
                    <text class="val" x="1053" y="745" textLength="32" lengthAdjust="spacingAndGlyphs">YBZ2</text>
                    <text class="val" x="1414" y="745" textLength="32" lengthAdjust="spacingAndGlyphs">YBZ3</text>
                    <text class="val" x="1776" y="745" textLength="32" lengthAdjust="spacingAndGlyphs">YBZ4</text>
                    <text class="val" x="691" y="787" textLength="95" lengthAdjust="spacingAndGlyphs">−0.050~2.950</text>
                    <text class="val" x="1053" y="787" textLength="95" lengthAdjust="spacingAndGlyphs">−0.050~2.950</text>
                    <text class="val" x="1414" y="787" textLength="95" lengthAdjust="spacingAndGlyphs">−0.050~2.950</text>
                    <text class="val" x="1776" y="787" textLength="95" lengthAdjust="spacingAndGlyphs">−0.050~2.950</text>
                    <text class="val" x="689" y="828" textLength="31" lengthAdjust="spacingAndGlyphs">6Φ16</text>
                    <text class="val" x="1051" y="828" textLength="31" lengthAdjust="spacingAndGlyphs">6Φ16</text>
                    <text class="val" x="1414" y="828" textLength="46" lengthAdjust="spacingAndGlyphs">18Φ20</text>
                    <text class="val" x="1773" y="828" textLength="46" lengthAdjust="spacingAndGlyphs">18Φ18</text>
                    <text class="val" x="689" y="869" textLength="118" lengthAdjust="spacingAndGlyphs">Φ8@200/Φ10@200</text>
                    <text class="val" x="1050" y="869" textLength="116" lengthAdjust="spacingAndGlyphs">?8@200/?10@200</text>
                    <text class="val" x="1413" y="869" textLength="58" lengthAdjust="spacingAndGlyphs">Φ10@200</text>
                    <text class="val" x="1774" y="869" textLength="58" lengthAdjust="spacingAndGlyphs">Φ10@200</text>
                    <text class="cjk" x="591" y="947" textLength="56" lengthAdjust="spacingAndGlyphs">水平分布筋</text>

                    <!-- stirrups column 1, reused for column 2 -->
                    <g id="stirrups">
                        <text class="cjk" x="588" y="331" textLength="60" lengthAdjust="spacingAndGlyphs">水平分布筋</text>
                        <path class="wl" d="M559 336H648"/>
                        <path class="cl" d="M631 307V346H646M648 309V336M645 337V345"/>
                        <path class="cl" d="M639 306C634 306 634 310 639 310H649C654 310 653 306 649 306M639 324C634 324 634 329 639 329H649C654 329 654 324 650 324"/>
                        <path d="M628 333L633 339M645 333L650 339" stroke="#0f0" stroke-width="3"/>
                        <text class="cjk" x="645" y="370" textLength="36" lengthAdjust="spacingAndGlyphs">第一层</text>
                        <rect class="cl" x="734" y="308" width="18" height="38"/>
                        <path class="cl" d="M741 325H736C729 325 729 331 736 330H741M745 326H749C753 326 753 330 748 330M747 346L751 342"/>
                        <text class="cjk" x="746.500" y="370" textLength="36" lengthAdjust="spacingAndGlyphs">第二层</text>
                    </g>
                    <use href="#stirrups" x="362"/>

                    <!-- YBZ1 section -->
                    <path class="wl" d="M655 412H687L690 405 693 419 696 412H728M666 412V536H717V412M666 443H717"/>
                    <path class="rl" d="M669 412V532H714V412M669 444H714M669 486H714"/>
                    <use href="#dt" x="673" y="446"/><use href="#dt" x="710" y="446"/><use href="#dt" x="673" y="489"/><use href="#dt" x="710" y="489"/><use href="#dt" x="673" y="528"/><use href="#dt" x="710" y="528"/>
                    <path class="gl" d="M661 443H629V536H661M666 541V577M717 541V577M666 572H717"/>
                    <use href="#tk" x="629" y="443" transform="rotate(90 629 443)"/><use href="#tk" x="629" y="536" transform="rotate(90 629 536)"/><use href="#tk" x="666" y="572"/><use href="#tk" x="717" y="572"/>
                    <text class="dim" transform="rotate(-90 617 490)" x="617" y="499" textLength="30" lengthAdjust="spacingAndGlyphs">450</text>
                    <text class="dim" x="691.500" y="568" textLength="30" lengthAdjust="spacingAndGlyphs">250</text>

                    <!-- YBZ2 section -->
                    <path class="wl" d="M1017 417H1048L1051 410 1054 424 1057 417H1090M1027.500 417V530H1079.500V417M1027.500 448H1079.500"/>
                    <path class="rl" d="M1031.500 417V526H1074.500V417M1031.500 449H1074.500M1031.500 492H1074.500"/>
                    <use href="#dt" x="1034" y="452"/><use href="#dt" x="1072" y="451"/><use href="#dt" x="1034" y="489"/><use href="#dt" x="1072" y="489"/><use href="#dt" x="1034" y="523"/><use href="#dt" x="1072" y="523"/>
                    <path class="gl" d="M1023 448H991.500V530H1023M1027.500 536V573M1079.500 536V573M1027.500 567H1079.500"/>
                    <use href="#tk" x="991" y="448" transform="rotate(90 991 448)"/><use href="#tk" x="991" y="530" transform="rotate(90 991 530)"/><use href="#tk" x="1027.500" y="567"/><use href="#tk" x="1079.500" y="567"/>
                    <text class="dim" transform="rotate(-90 979 489)" x="979" y="498" textLength="30" lengthAdjust="spacingAndGlyphs">400</text>
                    <text class="dim" x="1053" y="563" textLength="30" lengthAdjust="spacingAndGlyphs">250</text>

                    <!-- YBZ3 stirrups -->
                    <g id="ybz3-up">
                        <rect class="cl" x="1498" y="274" width="48" height="80"/>
                        <path class="cl" d="M1495 293H1541M1532 270V348M1529 348L1532 345"/>
                        <rect class="cl" x="1495" y="312" width="47" height="23"/>
                    </g>
                    <path class="cl" d="M1495 277V387M1517 280V387M1495 277H1517M1498 367H1522C1526 367 1526 363 1523 364M1498 383H1522C1526 383 1526 379 1523 380"/>
                    <use href="#ybz3-up" y="188"/>
                    <path class="cl" d="M1495 465V575H1517V465H1495M1498 554H1522C1526 554 1526 550 1523 551"/>
                    <text class="cjk" x="1457" y="355" textLength="60" lengthAdjust="spacingAndGlyphs">水平分布筋</text>
                    <path class="wl" d="M1428 359H1516"/>
                    <path d="M1492 356L1498 362M1514 356L1520 362" stroke="#0f0" stroke-width="3"/>
                    <text class="cjk" x="1516" y="426" textLength="36" lengthAdjust="spacingAndGlyphs">第一层</text>
                    <text class="cjk" x="1516" y="605" textLength="36" lengthAdjust="spacingAndGlyphs">第二层</text>

                    <!-- YBZ3 section -->
                    <path class="wl" d="M1363.500 634V375H1466.500V541H1415.500V634M1363.500 603H1415.500M1353 634H1385L1388 627 1391 643 1394 634H1426"/>
                    <path class="rl" d="M1367.500 634V379H1462.500V537H1367.500M1410.500 379V634M1436.500 379V537M1367.500 418H1462.500M1367.500 456H1462.500M1367.500 499H1462.500M1367.500 568H1410.500M1367.500 603H1410.500"/>
                    <use href="#dt" x="1370" y="383"/><use href="#dt" x="1407.500" y="383"/><use href="#dt" x="1433" y="383"/><use href="#dt" x="1459.500" y="383"/>
                    <use href="#dt" x="1370" y="421"/><use href="#dt" x="1459.500" y="421"/><use href="#dt" x="1370" y="458"/><use href="#dt" x="1459.500" y="458"/><use href="#dt" x="1370" y="496"/><use href="#dt" x="1459.500" y="496"/>
                    <use href="#dt" x="1370" y="534"/><use href="#dt" x="1407.500" y="534"/><use href="#dt" x="1433" y="534"/><use href="#dt" x="1459.500" y="534"/>
                    <use href="#dt" x="1370" y="565"/><use href="#dt" x="1407.500" y="565"/><use href="#dt" x="1370" y="600"/><use href="#dt" x="1407.500" y="600"/>
                    <path class="gl" d="M1358 375H1327.500V603H1358M1327.500 541H1358M1363.500 640V676M1415.500 640V676M1466.500 634V676M1363.500 670H1466.500"/>
                    <use href="#tk" x="1327.500" y="375" transform="rotate(90 1327.500 375)"/><use href="#tk" x="1327.500" y="541" transform="rotate(90 1327.500 541)"/><use href="#tk" x="1327.500" y="603" transform="rotate(90 1327.500 603)"/>
                    <use href="#tk" x="1363.500" y="670"/><use href="#tk" x="1415.500" y="670"/><use href="#tk" x="1466.500" y="670"/>
                    <text class="dim" transform="rotate(-90 1314 458)" x="1314" y="467" textLength="30" lengthAdjust="spacingAndGlyphs">800</text>
                    <text class="dim" transform="rotate(-90 1314 572)" x="1314" y="581" textLength="30" lengthAdjust="spacingAndGlyphs">300</text>
                    <text class="dim" x="1389" y="667" textLength="30" lengthAdjust="spacingAndGlyphs">250</text>
                    <text class="dim" x="1441" y="667" textLength="30" lengthAdjust="spacingAndGlyphs">250</text>

                    <!-- YBZ4 section -->
                    <path class="wl" d="M1782.500 339V432H1720V484H1782.500V608H1833.500V339M1771 339H1803L1806 332 1809 347 1812 339H1844.500M1782.500 370H1833.500"/>
                    <path class="rl" d="M1786.500 339V604H1829V339M1786.500 370H1829M1786.500 405H1829M1724 436V480H1829M1724 436H1829M1755 436V480M1786.500 516H1829M1786.500 562H1829"/>
                    <use href="#dt" x="1789" y="374"/><use href="#dt" x="1826.500" y="374"/><use href="#dt" x="1789" y="409"/><use href="#dt" x="1826.500" y="409"/><use href="#dt" x="1789" y="440"/><use href="#dt" x="1826.500" y="440"/>
                    <use href="#dt" x="1789" y="477"/><use href="#dt" x="1826.500" y="477"/><use href="#dt" x="1789" y="518"/><use href="#dt" x="1826.500" y="518"/><use href="#dt" x="1789" y="559"/><use href="#dt" x="1826.500" y="559"/><use href="#dt" x="1789" y="601"/><use href="#dt" x="1826.500" y="601"/>
                    <use href="#dt" x="1727.500" y="440"/><use href="#dt" x="1758.500" y="440"/><use href="#dt" x="1727.500" y="477"/><use href="#dt" x="1758.500" y="477"/>
                    <path class="gl" d="M1715 370H1683V608H1715M1683 432H1715M1683 484H1715M1720 613V650M1782.500 613V650M1833.500 613V650M1720 644H1833.500"/>
                    <use href="#tk" x="1683" y="370" transform="rotate(90 1683 370)"/><use href="#tk" x="1683" y="432" transform="rotate(90 1683 432)"/><use href="#tk" x="1683" y="484" transform="rotate(90 1683 484)"/><use href="#tk" x="1683" y="608" transform="rotate(90 1683 608)"/>
                    <use href="#tk" x="1720" y="644"/><use href="#tk" x="1782.500" y="644"/><use href="#tk" x="1833.500" y="644"/>
                    <text class="dim" transform="rotate(-90 1671 401)" x="1671" y="410" textLength="30" lengthAdjust="spacingAndGlyphs">300</text>
                    <text class="dim" transform="rotate(-90 1671 458)" x="1671" y="467" textLength="30" lengthAdjust="spacingAndGlyphs">250</text>
                    <text class="dim" transform="rotate(-90 1671 547)" x="1671" y="556" textLength="30" lengthAdjust="spacingAndGlyphs">600</text>
                    <text class="dim" x="1751" y="641" textLength="30" lengthAdjust="spacingAndGlyphs">300</text>
                    <text class="dim" x="1808" y="641" textLength="30" lengthAdjust="spacingAndGlyphs">250</text>
                    <text class="cjk" x="1848" y="312" textLength="60" lengthAdjust="spacingAndGlyphs">水平分布筋</text>
                    <path class="wl" d="M1820 317H1871"/>
                    <path class="cl" d="M1871 321H1859V344H1871M1871 494H1859V517H1871"/>
                </svg>
            </div>
            <div class="v-scroll">
                <svg class="position-absolute" style="left:3px;top:5px" width="10" height="7"><path d="M1 6l4-4 4 4" stroke="#555" stroke-width="1.500" fill="none"/></svg>
                <div class="v-scroll-thumb"></div>
                <svg class="position-absolute" style="left:3px;bottom:5px" width="10" height="7"><path d="M1 1l4 4 4-4" stroke="#555" stroke-width="1.500" fill="none"/></svg>
            </div>
        </div>
        <div class="h-scroll">‹<div class="h-scroll-thumb"></div></div>
    </div>

    <div class="side-strip side-strip-r">
        <div class="side-panel d-flex flex-column align-items-center" style="height:403px">
            <div class="side-btn"><svg width="18" height="18"><use href="#r-erase"/></svg></div>
            <div class="side-btn"><svg width="18" height="18"><use href="#r-copy"/></svg></div>
            <div class="side-btn"><svg width="18" height="18"><use href="#r-mirror"/></svg></div>
            <div class="side-btn"><svg width="18" height="18"><use href="#r-off"/></svg></div>
            <div class="side-btn"><svg width="18" height="18"><use href="#r-arr"/></svg></div>
            <div class="side-btn"><svg width="18" height="18"><use href="#r-move"/></svg></div>
            <div class="side-btn"><svg width="18" height="18"><use href="#r-rot"/></svg></div>
            <div class="side-btn"><svg width="18" height="18"><use href="#r-scale"/></svg></div>
            <div class="side-btn"><svg width="18" height="18"><use href="#r-str"/></svg></div>
            <div class="side-btn"><svg width="18" height="18"><use href="#r-trim"/></svg></div>
            <div class="side-btn"><svg width="18" height="18"><use href="#r-ext"/></svg></div>
            <div class="side-btn"><svg width="18" height="18"><use href="#r-brk1"/></svg></div>
            <div class="side-btn"><svg width="18" height="18"><use href="#r-brk2"/></svg></div>
            <div class="side-btn"><svg width="18" height="18"><use href="#r-join"/></svg></div>
            <div class="side-btn"><svg width="18" height="18"><use href="#r-cham"/></svg></div>
            <div class="side-btn"><svg width="18" height="18"><use href="#r-fil"/></svg></div>
            <div class="side-btn"><svg width="18" height="18"><use href="#r-blend"/></svg></div>
            <div class="side-btn"><svg width="18" height="18"><use href="#r-exp"/></svg></div>
        </div>
        <div class="side-panel d-flex flex-column align-items-center mt-1" style="height:146px">
            <div class="side-btn"><svg width="18" height="18"><use href="#r-ord1"/></svg></div>
            <div class="side-btn"><svg width="18" height="18"><use href="#r-ord2"/></svg></div>
            <div class="side-btn"><svg width="18" height="18"><use href="#r-ord3"/></svg></div>
            <div class="side-btn"><svg width="18" height="18"><use href="#r-ord4"/></svg></div>
            <div class="side-line"></div>
            <div class="side-btn"><svg width="18" height="18"><use href="#r-abc"/></svg></div>
            <div class="side-btn"><svg width="18" height="18"><use href="#r-hatchorder"/></svg></div>
        </div>
    </div>
</div>

<!-- command line -->
<div class="cad-cmd d-flex">
    <div class="cmd-handle d-flex flex-column align-items-center">
        <svg width="16" height="12" class="mt-1"><path d="M1 2h14M1 5h14" stroke="#aaa" stroke-dasharray="1 1" stroke-width="2"/></svg>
        <span style="font-size:15px;line-height:17px">X</span>
        <svg width="16" height="18" class="mt-1"><path d="M3 16L10 7M8 3a4 4 0 0 1 6 4l-3-1-1-3z" stroke="#eee" stroke-width="2.500" fill="#eee"/></svg>
    </div>
    <div class="flex-grow-1">
        <div class="cmd-log"><span class="cmd-cjk">自动保存到</span> C:\Users\Administrator\appdata\local\temp\<span class="cmd-cjk">宜宾</span>7#<span class="cmd-cjk">结构施工图</span>-<span class="cmd-cjk">基础柱板图</span>_1_1_8433.sv$ ...<br><span class="cmd-cjk">命令</span>:</div>
        <div class="cmd-input d-flex align-items-center">
            <svg width="14" height="18"><rect x=".5" y=".5" width="13" height="17" rx="1" fill="#eee" stroke="#889"/><path d="M3 5l3 3-3 3M7 12h4" stroke="#456" fill="none"/></svg>
            <svg width="7" height="5"><path d="M0 0h7L3.500 4z" fill="#999"/></svg>
            <span class="cmd-hint">键入命令</span>
        </div>
    </div>
</div>

<!-- layout tabs and status bar -->
<div class="status-bar d-flex">
    <div class="layout-tab layout-tab-on">模型</div>
    <div class="layout-tab layout-tab-off">Layout1</div>
    <div class="layout-tab layout-tab-add">+</div>
    <div class="ms-auto d-flex">
        <div class="stat-panel d-flex align-items-center" style="width:29px">模型</div>
        <div class="stat-panel d-flex align-items-center" style="width:65px">
            <svg width="16" height="16"><path d="M2 0v16M5 0v16M8 0v16M11 0v16M14 0v16M0 3h16M0 7h16M0 11h16" stroke="#ccc"/></svg>
            <svg width="16" height="16"><path d="M1 2h14M1 6h14M1 10h14M1 14h14" stroke="#ccc" stroke-dasharray="1 2"/></svg>
            <svg width="9" height="6"><path d="M0 0h9L4.500 6z" fill="#eee"/></svg>
        </div>
        <div class="stat-panel d-flex align-items-center" style="width:103px">
            <svg width="14" height="16"><path d="M1 0v15h12M1 9h6v6" stroke="#bbb" fill="none"/></svg>
            <svg width="16" height="16"><circle cx="8" cy="8" r="6.500" fill="none" stroke="#aaa" stroke-width="1.300"/><path d="M8 8h7" stroke="#aaa"/></svg>
            <svg width="8" height="5"><path d="M0 0h8L4 5z" fill="#eee"/></svg>
            <svg width="18" height="24"><path d="M3 1l12 22M13 1L5 23" stroke="#999" stroke-width="1.200"/></svg>
            <svg width="8" height="5"><path d="M0 0h8L4 5z" fill="#eee"/></svg>
        </div>
        <div class="stat-panel d-flex align-items-center" style="width:63px">
            <svg width="18" height="18"><path d="M1 16h16M1 16L15 3" stroke="#2f7fe8" stroke-width="1.600"/></svg>
            <svg width="16" height="20"><rect x="1" y="4" width="14" height="14" fill="none" stroke="#2f7fe8" stroke-width="1.300"/><rect x="1" y="1" width="5" height="5" fill="#111"/><rect x="2" y="2" width="3" height="3" fill="#0d0"/></svg>
            <svg width="8" height="5"><path d="M0 0h8L4 5z" fill="#eee"/></svg>
        </div>
        <div class="stat-panel d-flex align-items-center" style="width:107px">
            <svg width="18" height="22"><path d="M2 21l7-14 7 14-7-4z" fill="#2f86f0"/><circle cx="10" cy="6" r="3.500" fill="none" stroke="#2f86f0" stroke-width="1.300"/></svg>
            <svg width="18" height="22"><path d="M2 21l7-14 7 14-7-4z" fill="#999"/><path d="M9 1v8" stroke="#ccc"/></svg>
            <svg width="18" height="22"><path d="M2 21l7-16 7 16-7-4z" fill="#bbb"/></svg>
            <span style="font-size:13px">1:1</span>
            <svg width="8" height="5"><path d="M0 0h8L4 5z" fill="#eee"/></svg>
        </div>
        <div class="stat-panel d-flex align-items-center justify-content-start ps-1 pe-1" style="width:195px">
            <svg width="16" height="16"><circle cx="8" cy="8" r="4.500" fill="none" stroke="#aaa" stroke-width="3"/><path d="M8 0v3M8 13v3M0 8h3M13 8h3M2.500 2.500l2 2M11.500 11.500l2 2M13.500 2.500l-2 2M4.500 11.500l-2 2" stroke="#aaa" stroke-width="2"/></svg>
            <svg width="8" height="5" class="ms-1"><path d="M0 0h8L4 5z" fill="#eee"/></svg>
            <svg width="14" height="14" class="ms-1"><path d="M7 0v14M0 7h14" stroke="#aaa" stroke-width="2"/></svg>
            <svg width="16" height="16" class="ms-auto"><rect x="1" y="2" width="14" height="12" fill="none" stroke="#bbb" stroke-width="1.300"/><path d="M6 10l6-5m-4 0h4v4" stroke="#bbb" fill="none"/></svg>
            <svg width="16" height="16" class="ms-2"><path d="M0 2.500h16M0 8h16M0 13.500h16" stroke="#bbb" stroke-width="2"/></svg>
        </div>
    </div>
</div>

<!-- windows taskbar -->
<div class="task-bar d-flex">
    <div class="task-left d-flex align-items-center">
        <div class="task-start d-flex align-items-center justify-content-center">
            <svg width="18" height="18"><path d="M0 2.500L7.500 1.500V8.500H0zM8.500 1.300L18 0V8.500H8.500zM0 9.500H7.500V16.500L0 15.500zM8.500 9.500H18V18L8.500 16.700z" fill="#fff"/></svg>
        </div>
        <div class="task-line ms-2"></div>
        <div class="task-app d-flex align-items-center justify-content-center" style="margin-left:-2px">
            <svg width="24" height="24"><path d="M2 3h8l2 3h10v6H2z" fill="#f5cd63"/><rect x="2" y="10" width="20" height="13" fill="#fde192"/><rect x="8" y="15" width="8" height="8" fill="#3aa3e0"/></svg>
        </div>
        <div class="task-app d-flex align-items-center justify-content-center">
            <svg width="24" height="28"><ellipse cx="12" cy="14" rx="10" ry="13" fill="#8fd14f" stroke="#d8f0c0" stroke-width="1.500"/><path d="M6 13h12c0-7-11-7-12 0 0 7 9 8 12 4" fill="none" stroke="#fff" stroke-width="2.500"/></svg>
        </div>
        <div class="task-app d-flex align-items-center justify-content-center">
            <svg width="26" height="24"><ellipse cx="10" cy="10" rx="9" ry="8.500" fill="#5ac43a"/><ellipse cx="18" cy="16" rx="7.500" ry="7" fill="#f2f2f2"/><circle cx="7" cy="8" r="1.300" fill="#153"/><circle cx="13" cy="8" r="1.300" fill="#153"/><circle cx="16" cy="15" r="1" fill="#888"/><circle cx="20" cy="15" r="1" fill="#888"/></svg>
        </div>
        <div class="task-app task-app-on d-flex align-items-center justify-content-center">
            <svg width="24" height="24"><defs><linearGradient id="acadBg" x1="0" y1="0" x2="0" y2="1"><stop offset="0" stop-color="#f7f0ee"/><stop offset=".4" stop-color="#e8696a"/><stop offset="1" stop-color="#c11f23"/></linearGradient></defs><rect width="24" height="24" fill="url(#acadBg)"/><path d="M12 3L5 21c3-2 5-2 7-2s4 0 7 2z" fill="#9a0d10"/></svg>
        </div>
        <div class="task-app d-flex align-items-center justify-content-center">
            <svg width="24" height="24"><rect width="24" height="24" rx="5" fill="#1c8ff0"/><text x="12" y="19" font-size="19" font-weight="700" text-anchor="middle" font-family="Liberation Sans" fill="#fff">T</text></svg>
        </div>
        <div class="task-app d-flex align-items-center justify-content-center">
            <svg width="22" height="22"><rect width="22" height="22" rx="4" fill="#1a73e8"/><rect x="4" y="4" width="14" height="14" rx="2" fill="#fff"/><text x="11" y="16" font-size="13" font-weight="700" text-anchor="middle" font-family="Liberation Sans" fill="#1a73e8">W</text></svg>
        </div>
    </div>
    <div class="ghost-list">
        <div class="d-flex align-items-center gap-2"><svg width="14" height="6"><rect width="14" height="5" fill="#111"/></svg><span>KINGSTON (H:)</span></div>
        <div class="d-flex align-items-center gap-2"><svg width="12" height="12"><rect width="12" height="12" fill="#3b3820"/></svg><span>工程部</span></div>
    </div>
    <div class="d-flex align-items-center ms-auto">
        <div class="tray-btn d-flex align-items-center justify-content-center"><svg width="12" height="24"><rect x="1" y="2" width="10" height="5" fill="#ddd"/><rect x="1" y="7" width="10" height="15" fill="#4caf3a"/><path d="M6 10v8M4 13h4" stroke="#fff"/></svg></div>
        <div class="tray-btn d-flex align-items-center justify-content-center" style="margin-left:4px"><svg width="14" height="8"><path d="M1 7l6-6 6 6" stroke="#ddd" stroke-width="1.300" fill="none"/></svg></div>
        <div class="tray-btn d-flex align-items-center justify-content-center"><svg width="18" height="20"><ellipse cx="9" cy="10" rx="7.500" ry="9" fill="#7cc943" stroke="#d8f0c0"/><path d="M5 9h8M5 9c1-5 7-5 8 0M5 12c2 3 6 3 8 0" stroke="#fff" stroke-width="1.600" fill="none"/></svg></div>
        <div class="tray-btn d-flex align-items-center justify-content-center"><svg width="20" height="18"><ellipse cx="8" cy="8" rx="7" ry="6.500" fill="#5ac43a"/><ellipse cx="14" cy="12" rx="5.500" ry="5" fill="#eee"/></svg></div>
        <div class="tray-btn d-flex align-items-center justify-content-center"><svg width="18" height="20"><ellipse cx="7" cy="8" rx="5" ry="7" fill="#222" stroke="#888" stroke-width=".5"/><ellipse cx="7" cy="11" rx="3" ry="4" fill="#eee"/><path d="M2 14h8l-1 2H3z" fill="#e33"/><circle cx="13" cy="14" r="5" fill="#f2a14a"/><path d="M10 13h6M10 15h6" stroke="#fff"/></svg></div>
        <div class="tray-btn d-flex align-items-center justify-content-center"><svg width="18" height="18"><circle cx="9" cy="9" r="8.500" fill="#d9bf24"/><circle cx="9" cy="9" r="5.500" fill="#2f8b2f"/><path d="M9 5.500v7M5.500 9h7" stroke="#fff" stroke-width="2"/></svg></div>
        <div class="tray-btn d-flex align-items-center justify-content-center"><svg width="18" height="18"><path d="M5.500 1.500h11v10h-11zM9 11.500V16M5 16.500h8" stroke="#eee" fill="none"/><rect x=".5" y="4.500" width="6" height="4" fill="#222" stroke="#eee"/></svg></div>
        <div class="tray-btn d-flex align-items-center justify-content-center"><svg width="18" height="18"><path d="M1 6h3l4-4v12l-4-3H1z" fill="none" stroke="#eee"/><circle cx="13" cy="12" r="5" fill="#e02a2a"/><path d="M11 10l4 4m0-4l-4 4" stroke="#fff"/></svg></div>
        <div class="tray-btn d-flex align-items-center justify-content-center" style="margin-left:7px"><svg width="18" height="20" viewBox="0 0 18 20"><path d="M3 2l13-1 1 16-13 2z" fill="#2fb62f"/><path d="M13 6H7v4h5v4H6" stroke="#fff" stroke-width="2.400" fill="none"/></svg></div>
        <div class="tray-clock"><div>9:45</div><div>2020/6/8 星期一</div></div>
        <div class="tray-btn d-flex align-items-center justify-content-center" style="width:28px"><svg width="24" height="26"><path d="M2 2h12l3 3v16H2z" fill="#ddd"/><path d="M5 7h9M5 11h9M5 15h9" stroke="#555"/><rect x="11" y="14" width="12" height="11" fill="#2a3a55" stroke="#ccc" stroke-width=".5"/><text x="17" y="23" font-size="9" text-anchor="middle" fill="#fff" font-family="Liberation Sans">1</text></svg></div>
        <div class="tray-btn d-flex align-items-center justify-content-center" style="width:36px;margin:0 16px 0 6px"><svg width="18" height="20"><path d="M1.500 1.500h15v13h-6l-3 4v-4h-6z" fill="none" stroke="#eee" stroke-width="1.300"/></svg></div>
    </div>
</div>

<!-- sogou IME floating bar -->
<svg class="ime-logo" width="27" height="28" viewBox="0 0 27 28"><path d="M5 1l21 3-4 23L1 24z" fill="#2fb62f"/><path d="M20 9H10v4h8v5H7" stroke="#fff" stroke-width="3.500" fill="none"/></svg>
<div class="ime-bar d-flex align-items-center">
    <div class="ime-btn">五</div>
    <div class="ime-btn"><svg width="22" height="22"><path d="M14 4c-1 6-4 9-9 10 3 3 11 2 13-3 1-3-1-6-4-7z" fill="#3b4556"/></svg></div>
    <div class="ime-btn" style="font-size:13px">°,</div>
    <div class="ime-btn d-flex align-items-center justify-content-center"><svg width="16" height="13"><rect x=".5" y=".5" width="15" height="12" rx="1" fill="#3b4556"/><path d="M2 3.500h12M2 6.500h12M4 9.500h8" stroke="#fff" stroke-dasharray="1.500 1"/></svg></div>
    <div class="ime-btn d-flex align-items-center justify-content-center"><svg width="14" height="16"><circle cx="7" cy="4" r="3.500" fill="#b9cbc8"/><path d="M1 16c0-5 2-7 6-7s6 2 6 7z" fill="#b9cbc8"/></svg></div>
    <div class="ime-btn d-flex align-items-center justify-content-center"><svg width="15" height="16"><path d="M2 14L9 6" stroke="#3b4556" stroke-width="3"/><path d="M14 2l-3 3-1-1 2-3c-3-1-5 2-4 5l3 2c3 0 5-3 3-6z" fill="#3b4556"/></svg></div>
</div>

<!-- network speed ball -->
<div class="net-pill">
    <div class="d-flex align-items-center gap-1" style="margin-top:3px"><svg width="9" height="11"><path d="M4.500 0L9 5H6v6H3V5H0z" fill="#e0533c"/></svg><span class="ms-1">0.03K/s</span></div>
    <div class="d-flex align-items-center gap-1 pe-1"><svg width="9" height="11"><path d="M4.500 11L9 6H6V0H3v6H0z" fill="#2fa84f"/></svg><span class="ms-auto">2.1K/s</span></div>
</div>
<div class="net-ball">64%</div>

<script src="https://cdn.jsdelivr.net/npm/bootstrap@5.3.2/dist/js/bootstrap.bundle.min.js"></script>
</body>
</html>
